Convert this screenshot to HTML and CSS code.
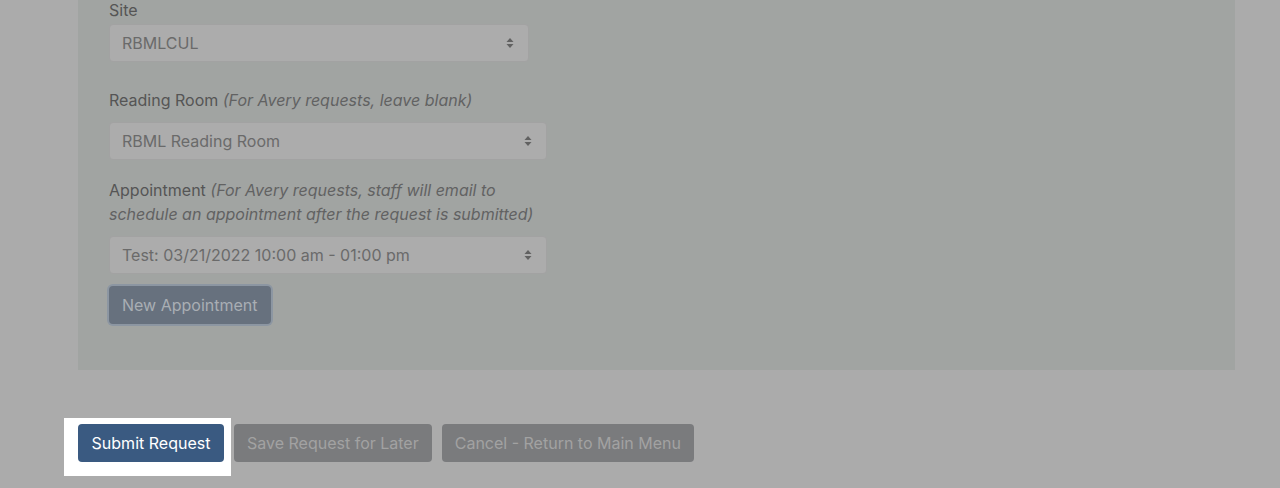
FILE: index.html
```html
<!DOCTYPE html>
<html lang="en">
<head>
  <meta charset="UTF-8" />
  <title>Request</title>
  <link rel="stylesheet" href="styles.css">
</head>
<body>

  <div class="panel">
    <div class="group group-site">
      <label class="field-label">Site</label>
      <div class="select select-short">
        <span>RBMLCUL</span>
        <svg class="caret" width="8" height="12" viewBox="0 0 8 12"><path d="M4 1 L7.5 5 H0.5 Z M4 11 L7.5 7 H0.5 Z" fill="#616161"/></svg>
      </div>
    </div>

    <div class="group group-room">
      <label class="field-label">Reading Room <em>(For Avery requests, leave blank)</em></label>
      <div class="select">
        <span>RBML Reading Room</span>
        <svg class="caret" width="8" height="12" viewBox="0 0 8 12"><path d="M4 1 L7.5 5 H0.5 Z M4 11 L7.5 7 H0.5 Z" fill="#616161"/></svg>
      </div>
    </div>

    <div class="group group-appt">
      <label class="field-label">Appointment <em>(For Avery requests, staff will email to schedule an appointment after the request is submitted)</em></label>
      <div class="select">
        <span>Test: 03/21/2022 10:00 am - 01:00 pm</span>
        <svg class="caret" width="8" height="12" viewBox="0 0 8 12"><path d="M4 1 L7.5 5 H0.5 Z M4 11 L7.5 7 H0.5 Z" fill="#616161"/></svg>
      </div>
      <button class="btn btn-appt">New Appointment</button>
    </div>
  </div>

  <div class="actions">
    <div class="highlight">
      <button class="btn btn-submit">Submit Request</button>
    </div>
    <button class="btn btn-muted">Save Request for Later</button>
    <button class="btn btn-muted">Cancel - Return to Main Menu</button>
  </div>

</body>
</html>
```

FILE: styles.css
```css
body {
  margin: 0;
  padding-bottom: 40px;
  background: #ababab;
  font-family: Inter, "Liberation Sans", sans-serif;
  font-size: 16px;
  line-height: 24px;
  color: #555;
}

.panel {
  margin: 0 45px 0 78px;
  padding: 0 31px 46px 31px;
  background: #a1a4a2;
}

.group {
  width: 438px;
}
.group-site {
  margin-top: -2px;
}
.group-site .field-label {
  margin-bottom: 2px;
}
.group-room {
  margin-top: 26px;
}
.group-appt {
  margin-top: 18px;
}

.field-label {
  display: block;
  margin-bottom: 10px;
  color: #555;
}
.field-label em {
  color: #626262;
}

.select {
  display: flex;
  align-items: center;
  justify-content: space-between;
  box-sizing: border-box;
  height: 38px;
  padding: 0 14px 0 12px;
  border: 1px solid #a2a2a2;
  border-radius: 4px;
  background: #acacac;
  color: #6a6a6a;
}
.select-short {
  width: 420px;
}
.caret {
  display: block;
}

.btn {
  font-family: inherit;
  font-size: 16px;
  line-height: 24px;
  height: 38px;
  padding: 0 12px;
  border: 1px solid transparent;
  border-radius: 4px;
}

.btn-appt {
  margin-top: 12px;
  background: #67717e;
  color: #a9aeb4;
  box-shadow: 0 0 0 2px #8c96a2;
}

.actions {
  display: flex;
  gap: 10px;
  margin: 54px 0 0 78px;
}

.highlight {
  position: relative;
  height: 38px;
}
.highlight::before {
  content: "";
  position: absolute;
  top: -6px;
  left: -14px;
  right: -7px;
  bottom: -14px;
  background: #fff;
}

.btn-submit {
  position: relative;
  display: block;
  width: 146px;
  background: #3a5a81;
  color: #fff;
}

.btn-muted {
  background: #7a7b7d;
  color: #a2a2a2;
}
```
